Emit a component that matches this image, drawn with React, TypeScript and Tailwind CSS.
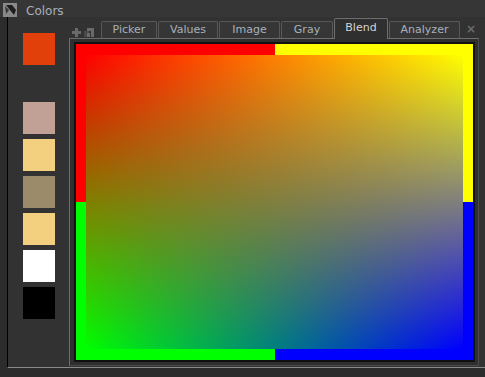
import React from "react";

const SWATCHES = ["#c1a196", "#f3cf80", "#9c8b6b", "#f3cf80", "#ffffff", "#000000"];

const TABS = [
  { label: "Picker", w: "w-[56px]" },
  { label: "Values", w: "w-[60px]" },
  { label: "Image", w: "w-[61px]" },
  { label: "Gray", w: "w-[52px]" },
  { label: "Blend", w: "w-[54px]", active: true },
  { label: "Analyzer", w: "w-[71px]" },
];

function PanelIcon() {
  return (
    <svg width="14" height="14" viewBox="0 0 14 14">
      <rect x="0" y="0" width="14" height="14" fill="#8a8a8a" />
      <path d="M3 2 L9 2 L13 7 L11 12 Z" fill="#1e1e1e" />
      <path d="M2 3 L6 7 L3 11 Z" fill="#3a3a3a" />
    </svg>
  );
}

function Blend() {
  return (
    <div className="flex flex-col w-[397px] h-[316px]">
      <div className="flex h-[11px]">
        <div className="flex-1 bg-[#ff0000]" />
        <div className="flex-1 bg-[#ffff00]" />
      </div>
      <div className="flex flex-1">
        <div className="flex flex-col w-[10px]">
          <div className="flex-1 bg-[#ff0000]" />
          <div className="flex-1 bg-[#00ff00]" />
        </div>
        <div className="relative flex-1 bg-[linear-gradient(to_right,#00ff00,#0000ff)]">
          <div className="absolute inset-0 bg-[linear-gradient(to_right,#ff0000,#ffff00)] [mask-image:linear-gradient(to_bottom,#000,transparent)]" />
        </div>
        <div className="flex flex-col w-[10px]">
          <div className="flex-1 bg-[#ffff00]" />
          <div className="flex-1 bg-[#0000ff]" />
        </div>
      </div>
      <div className="flex h-[11px]">
        <div className="flex-1 bg-[#00ff00]" />
        <div className="flex-1 bg-[#0000ff]" />
      </div>
    </div>
  );
}

export default function App() {
  return (
    <div
      className="w-[485px] h-[377px] bg-[#2c2c2c] flex flex-col overflow-hidden"
      style={{ fontFamily: '"DejaVu Sans", Verdana, sans-serif' }}
    >
      {/* title bar */}
      <div className="h-[17px] flex items-center bg-[#363636] shrink-0">
        <div className="ml-[3px] mt-[2px]">
          <PanelIcon />
        </div>
        <span className="ml-[9px] mt-[5px] text-[12px] leading-none text-[#a9b1b9]">Colors</span>
      </div>

      {/* body frame */}
      <div className="pl-[7px] shrink-0">
        <div className="h-[351px] flex border-l border-black border-b border-b-[#8a8a8a] bg-[#323232]">
          {/* swatch column */}
          <div className="w-[61px] pl-[15px] pt-[16px] flex flex-col bg-[#323232]">
            <div className="w-[32px] h-[32px] bg-[#e2400b]" />
            <div className="mt-[37px] flex flex-col gap-[5px]">
              {SWATCHES.map((c, i) => (
                <div key={i} className="w-[32px] h-[32px]" style={{ backgroundColor: c }} />
              ))}
            </div>
          </div>

          {/* tabbed panel */}
          <div className="flex flex-col w-[410px]">
            <div className="h-[21px] flex items-end relative">
              <div className="w-[32px] h-[17px] flex items-center pl-[3px] gap-[3px] self-start mt-[7px]">
                <svg width="9" height="9" viewBox="0 0 9 9">
                  <rect x="3" y="0" width="3" height="9" fill="#6a6a6a" />
                  <rect x="0" y="3" width="9" height="3" fill="#6a6a6a" />
                </svg>
                <svg width="10" height="9" viewBox="0 0 10 9">
                  <path d="M3 0 H10 V9 H7 V3 H3 Z" fill="#6a6a6a" />
                  <rect x="0" y="3" width="5" height="6" fill="#4a4a4a" />
                  <rect x="3" y="5" width="3" height="4" fill="#6a6a6a" />
                </svg>
              </div>
              <div className="flex items-end gap-[1px] z-10">
                {TABS.map((t) =>
                  t.active ? (
                    <div
                      key={t.label}
                      className={`${t.w} h-[21px] -mb-px flex items-center justify-center border border-b-0 border-[#6e6e6e] bg-[#2f2f2f] text-[11px] text-[#d4d4d4] rounded-t-[2px] pb-[2px]`}
                    >
                      {t.label}
                    </div>
                  ) : (
                    <div
                      key={t.label}
                      className={`${t.w} h-[17px] flex items-center justify-center border border-b-0 border-[#585858] bg-[#363636] text-[11px] text-[#a7b1bb] rounded-t-[2px] pt-[1px]`}
                    >
                      {t.label}
                    </div>
                  )
                )}
              </div>
              <span className="ml-[6px] self-center mt-[2px] text-[12px] font-bold leading-none text-[#6c6c6c]">×</span>
            </div>
            <div className="h-[328px] w-[410px] border border-t-[#6e6e6e] border-l-[#6e6e6e] border-r-[#4a4a4a] border-b-[#4a4a4a] bg-[#2f2f2f] pt-[3px] pl-[4px]">
              <div className="border-2 border-[#111] w-[401px]">
                <Blend />
              </div>
            </div>
          </div>
        </div>
      </div>
    </div>
  );
}
